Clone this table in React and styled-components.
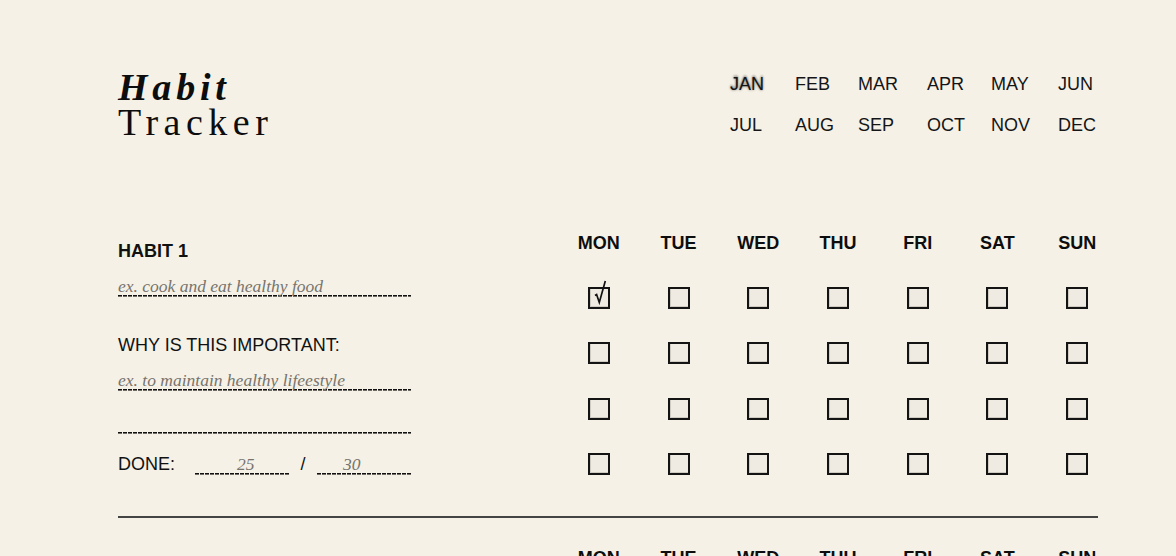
import React from "react";
import styled, { createGlobalStyle } from "styled-components";

const Global = createGlobalStyle`
  html, body { margin: 0; padding: 0; overflow: hidden; background: #f5f1e7; }
  body { font-family: "Liberation Sans", Arial, sans-serif; color: #111; }
`;

const Page = styled.div`
  width: 980px;
  padding: 70px 78px 0 118px;
`;

const Header = styled.header`
  display: flex;
  justify-content: space-between;
  align-items: flex-start;
`;

const Title = styled.h1`
  margin: 0;
  font-family: "Liberation Serif", "Times New Roman", serif;
  font-size: 38px;
  line-height: 35px;
  font-weight: 400;
  color: #0d0d0d;
`;

const TitleLine = styled.span`
  display: block;
  font-style: ${(p) => (p.$italic ? "italic" : "normal")};
  font-weight: ${(p) => (p.$italic ? 700 : 400)};
  letter-spacing: ${(p) => (p.$italic ? "4.8px" : "5.5px")};
`;

const Months = styled.nav`
  margin-top: 4px;
  display: grid;
  grid-template-columns: 65px 63px 69px 64px 67px 40px;
  row-gap: 21px;
  font-size: 18px;
  line-height: 20px;
`;

const Month = styled.span`
  color: #151515;
  text-shadow: ${(p) =>
    p.$active
      ? "0 0 3px rgba(0,0,0,0.32), 0 0 2px rgba(0,0,0,0.25), 0 -2px 2px rgba(0,0,0,0.2)"
      : "none"};
`;

const Section = styled.section`
  margin-top: 63px;
  padding: 31px 0 40px;
  border-bottom: 2px solid #444;
  display: flex;
  gap: 148px;
  & + & { margin-top: 0; }
`;

const Left = styled.div`
  width: 293px;
  flex-shrink: 0;
  padding-top: 7px;
  display: flex;
  flex-direction: column;
`;

const Label = styled.div`
  font-size: 18px;
  line-height: 20px;
  font-weight: ${(p) => (p.$bold ? 700 : 400)};
  margin-top: ${(p) => p.$mt || 0}px;
  white-space: nowrap;
`;

const Field = styled.div`
  height: 22px;
  margin-top: ${(p) => p.$mt || 0}px;
  width: ${(p) => (p.$w ? `${p.$w}px` : "auto")};
  padding-left: ${(p) => p.$pl || 0}px;
  box-sizing: border-box;
  font-family: "Liberation Serif", "Times New Roman", serif;
  font-style: italic;
  font-size: 17.5px;
  line-height: 22px;
  color: #77746d;
  white-space: nowrap;
  background-image:
    linear-gradient(to right, #111 4px, transparent 4px),
    linear-gradient(to right, #6f6c65 4px, transparent 4px);
  background-size: 5px 1px, 5px 1px;
  background-repeat: repeat-x;
  background-position: left calc(100% - 1px), left bottom;
`;

const DoneRow = styled.div`
  margin-top: 19px;
  display: flex;
  align-items: baseline;
`;

const DoneLabel = styled(Label)`
  width: 77px;
  flex-shrink: 0;
`;

const Slash = styled.span`
  width: 28px;
  text-align: center;
  font-size: 18px;
  line-height: 20px;
`;

const Days = styled.div`
  width: 558px;
  flex-shrink: 0;
  display: grid;
  grid-template-columns: repeat(7, 1fr);
  grid-template-rows: 20px repeat(4, 22px);
  row-gap: 33.6px;
  & > *:nth-child(-n + 7) { margin-bottom: -1px; margin-top: -1px; }
`;

const DayHead = styled.div`
  font-size: 18px;
  line-height: 20px;
  font-weight: 700;
  text-align: center;
  color: #0d0d0d;
`;

const Cell = styled.div`
  display: flex;
  justify-content: center;
  transform: translateY(-1px);
`;

const Box = styled.div`
  position: relative;
  width: 22px;
  height: 22px;
  box-sizing: border-box;
  border: 2px solid #141414;
  background: #efebe2;
  box-shadow: inset 1px -1px 0 #cfcbc0;
`;

const Check = styled.svg`
  position: absolute;
  left: -2px;
  top: -11px;
  overflow: visible;
`;

const DAYS = ["MON", "TUE", "WED", "THU", "FRI", "SAT", "SUN"];
const MONTHS = ["JAN", "FEB", "MAR", "APR", "MAY", "JUN", "JUL", "AUG", "SEP", "OCT", "NOV", "DEC"];

function HabitSection({ n, checked }) {
  return (
    <Section>
      <Left>
        <Label $bold>HABIT {n}</Label>
        <Field $mt={14}>ex. cook and eat healthy food</Field>
        <Label $mt={38}>WHY IS THIS IMPORTANT:</Label>
        <Field $mt={13.6}>ex. to maintain healthy lifeestyle</Field>
        <Field $mt={21} />
        <DoneRow>
          <DoneLabel>DONE:</DoneLabel>
          <Field $w={94} $pl={42}>25</Field>
          <Slash>/</Slash>
          <Field $w={94} $pl={26}>30</Field>
        </DoneRow>
      </Left>
      <Days>
        {DAYS.map((d) => (
          <DayHead key={d}>{d}</DayHead>
        ))}
        {Array.from({ length: 28 }).map((_, i) => (
          <Cell key={i}>
            <Box>
              {checked && i === 0 && (
                <Check width="22" height="30" viewBox="0 0 22 30">
                  <path
                    d="M7 17.5 L8.6 16.6 L11.3 24.5 L17.3 3"
                    fill="none"
                    stroke="#111"
                    strokeWidth="1.7"
                    strokeLinejoin="miter"
                  />
                </Check>
              )}
            </Box>
          </Cell>
        ))}
      </Days>
    </Section>
  );
}

export default function App() {
  return (
    <>
      <Global />
      <Page>
        <Header>
          <Title>
            <TitleLine $italic>Habit</TitleLine>
            <TitleLine>Tracker</TitleLine>
          </Title>
          <Months>
            {MONTHS.map((m) => (
              <Month key={m} $active={m === "JAN"}>
                {m}
              </Month>
            ))}
          </Months>
        </Header>
        <HabitSection n={1} checked />
        <HabitSection n={2} />
      </Page>
    </>
  );
}
